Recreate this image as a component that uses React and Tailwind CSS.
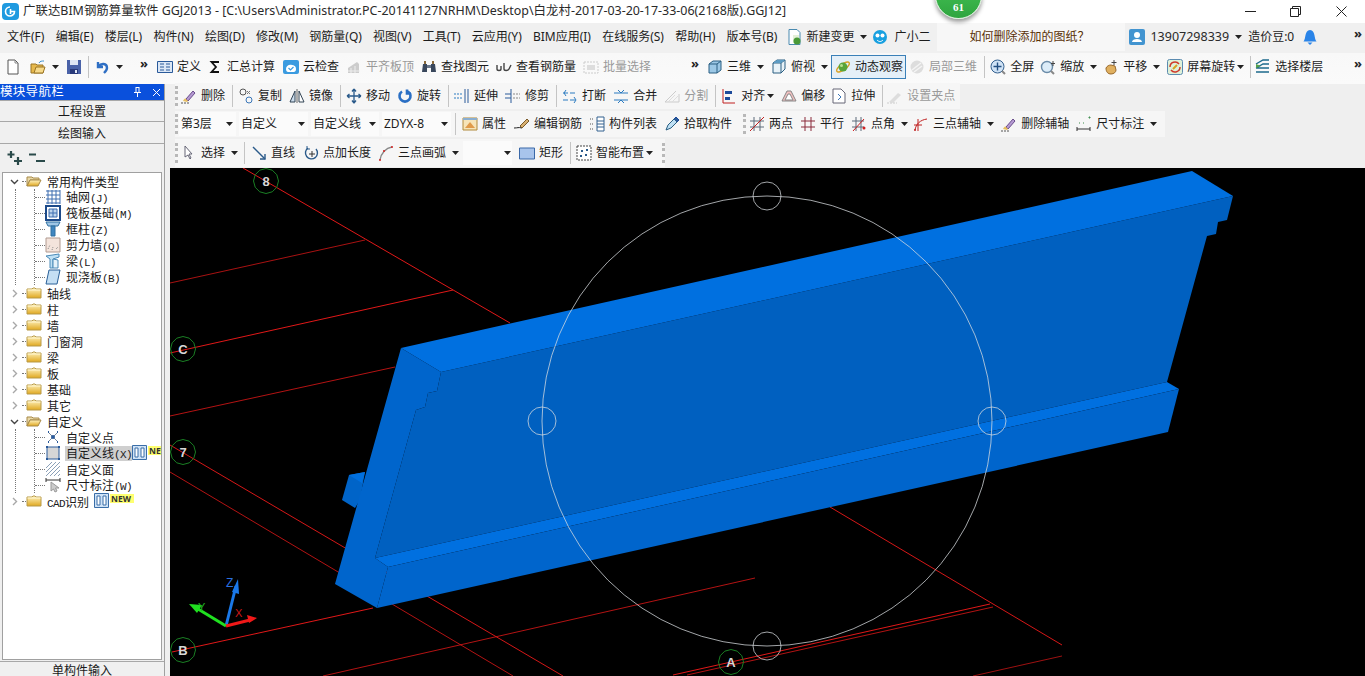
import React from "react";

const font = { fontFamily: '"Noto Sans","Noto Sans CJK SC",sans-serif' };
const monoFont = { fontFamily: '"Liberation Mono",monospace' };

function Svg({ children }) {
  return <svg width="16" height="16" viewBox="0 0 16 16" fill="none" className="shrink-0 block">{children}</svg>;
}

// toolbar icons, hand drawn to the 16px originals
const icons = {
  newdoc: <><path d="M3 1h7l3 3v11H3z" fill="#fff" stroke="#555" /><path d="M10 1v3h3" stroke="#888" /></>,
  open: <><path d="M1 5h5l1 1h6v8H1z" fill="#e6b84c" stroke="#9a7424" /><path d="M4 14l2-6h9l-2 6z" fill="#f6d98a" stroke="#9a7424" /><path d="M9 4c1-2 3-2 5-2" stroke="#3a8fd0" /></>,
  save: <><path d="M1 1h14v14H1z" fill="#4a62a8" /><path d="M4 1h8v5H4z" fill="#dfe6f4" /><path d="M4 10h8v5H4z" fill="#29397a" /><path d="M9 11h2v3H9z" fill="#dfe6f4" /></>,
  undo: <path d="M4 3v5h5M4.5 7.5C7 4 13 4 13 9c0 2-1 3-3 5" stroke="#2f6fc4" strokeWidth="2.4" />,
  define: <><path d="M0.5 2.5h15v11h-15z" fill="#dbe7f6" stroke="#2a5a9a" /><path d="M3 5h4M3 8h4M3 11h4M9 5h4M9 8h4M9 11h4" stroke="#2a5a9a" /></>,
  sum: <path d="M12 3H4.5L9 8l-4.5 5H12" stroke="#111" strokeWidth="1.8" />,
  cloud: <><rect x="0" y="1" width="16" height="14" rx="2" fill="#3b9be0" /><path d="M3 10c0-3 3-5 6-4 2 0 4 1 4 4s-2 3-3 3H5c-1 0-2-1-2-3z" fill="#fff" /><path d="M5.5 9l2 2 3-3" stroke="#3b9be0" strokeWidth="1.2" /></>,
  level: <><path d="M2 14V9l9-6 2 2v9z" fill="#ccc" /><path d="M2 12h12M5 9v5M9 7v7" stroke="#eee" /></>,
  find: <><path d="M2 5h4v8H1zM10 5h4l1 8h-5z" fill="#39475c" /><path d="M6 6h4v3H6z" fill="#6a7688" /><path d="M3 2h2v3H3zM11 2h2v3h-2z" fill="#8a6a3a" /></>,
  rebar: <path d="M1 6v4c0 2 4 2 4 0V7M8 4v6c0 2 4 2 5 0l2-4" stroke="#444" strokeWidth="1.4" />,
  batch: <><path d="M1 3h14v11H1z" stroke="#ccc" strokeDasharray="2 1" /><path d="M4 6h8v5H4z" fill="#ddd" /></>,
  cube: <><path d="M2 5l4-3h8v9l-4 3H2z" fill="#9cc8e6" stroke="#2a5f82" /><path d="M2 5h8v9M10 5l4-3" stroke="#2a5f82" /></>,
  cubeTop: <><path d="M2 4l4-3h8v9l-4 4H2z" fill="#e8f2f8" stroke="#2a5f82" /><path d="M2 4h8v10M10 4l4-3" stroke="#2a5f82" /><path d="M2 4l4-3h8l-4 3z" fill="#5c9cc4" /></>,
  orbit: <><ellipse cx="8" cy="8" rx="7.5" ry="3" transform="rotate(-35 8 8)" stroke="#d8a020" strokeWidth="1.4" /><circle cx="8" cy="8" r="4.5" fill="#5aa53a" /><circle cx="6.5" cy="6.5" r="1.5" fill="#b8e090" /></>,
  local: <><circle cx="8" cy="8" r="6.5" fill="#ddd" /><path d="M3 11l9-7M5 13l8-6" stroke="#f4f4f4" strokeWidth="1.5" /></>,
  fit: <><circle cx="7.5" cy="7.5" r="6.5" fill="#cfe2f5" stroke="#33608f" /><path d="M7.5 3.5v8M3.5 7.5h8" stroke="#234f82" strokeWidth="1.4" /><path d="M12 12l3 3" stroke="#888" strokeWidth="2" /></>,
  zoom: <><circle cx="7" cy="8" r="5.5" fill="#dcecf8" stroke="#6a8ba8" strokeWidth="1.4" /><path d="M11 12l3 3" stroke="#888" strokeWidth="2" /><path d="M13 2v5M11 4.5h4" stroke="#444" /></>,
  pan: <><path d="M3 9c1-2 3-3 5-3l4 1 1 4c0 2-2 4-5 4s-5-2-5-6z" fill="#e0b060" stroke="#98682a" /><path d="M11 1v5M8.5 3.5h5" stroke="#444" /></>,
  rotate: <><rect x="0.5" y="0.5" width="15" height="15" rx="2" fill="#dff0d8" stroke="#5b8bb0" /><path d="M3 8a5 5 0 0 1 9-3M13 8a5 5 0 0 1-9 3" stroke="#d0392c" strokeWidth="1.5" /><path d="M6 10l4-4" stroke="#d8a020" strokeWidth="2" /></>,
  floor: <><path d="M1 5l7-4h6M1 9l7-4h6M1 13h13M1 9h13" stroke="#1c6a8c" strokeWidth="1.4" /><path d="M1 5l5 2-5 2z" fill="#55a04a" /></>,
  erase: <><path d="M5 11l7-8 2 2-7 8z" fill="#b59ad2" stroke="#6a4c8c" /><path d="M2 13c1-2 2-3 3-2l2 2-1 1z" fill="#e8c060" /><path d="M0 15h9" stroke="#555" strokeDasharray="2 1" /></>,
  copy: <><circle cx="5" cy="4" r="3" stroke="#555" /><circle cx="11" cy="12" r="3" stroke="#3a76b8" /><path d="M9 3l3 3M12 3l-3 3" stroke="#777" /></>,
  mirror: <><path d="M8 1v14" stroke="#666" /><path d="M6 3L1 14h5z" fill="#cde" stroke="#345" /><path d="M10 3l5 11h-5z" fill="#fff" stroke="#345" /></>,
  move: <path d="M8 1v14M1 8h14M8 1L6 3.5M8 1l2 2.5M8 15l-2-2.5M8 15l2-2.5M1 8l2.5-2M1 8l2.5 2M15 8l-2.5-2M15 8l-2.5 2" stroke="#2a5a8a" strokeWidth="1.3" />,
  spin: <path d="M5 3.5a5.5 5.5 0 1 0 6 0M10 1.5v4h4" stroke="#2a6fc4" strokeWidth="2.6" />,
  extend: <><path d="M14 1v14M11 1v14" stroke="#2a5a9a" /><path d="M0 6h8M0 10h8" stroke="#2a7ac0" strokeDasharray="2 1" /></>,
  trim: <><path d="M6 1v14" stroke="#2a5a9a" /><path d="M0 6h6M0 10h6" stroke="#2a5a9a" /><path d="M8 6h7M8 10h7" stroke="#888" strokeDasharray="2 1" /></>,
  breakit: <><path d="M1 5h14M1 12h14" stroke="#2a7ac0" strokeDasharray="5 2" /><path d="M4 2L2 5l2 3M12 9l2 3-2 3" stroke="#2a7ac0" /></>,
  merge: <><path d="M1 5h14M1 12h14" stroke="#2a7ac0" /><path d="M5 2l3 3 3-3M5 15l3-3 3 3" stroke="#2a7ac0" /></>,
  split: <><path d="M1 14L12 3M1 14h14V6" stroke="#ccc" /><path d="M4 14l7-7M8 14l6-6" stroke="#ddd" /></>,
  align: <><path d="M2 1v14h12" stroke="#c02020" /><path d="M4 3h7v3H4zM4 9h5v3H4z" fill="#1c4a9a" /></>,
  offset: <><path d="M1 13l5-10h4l5 10z" fill="#f2c0c0" stroke="#888" /><path d="M4 12l3-6h2l3 6z" fill="#fff" stroke="#888" /></>,
  stretch: <><path d="M2 1h8l4 4v10H2z" fill="#fff" stroke="#667" /><path d="M7 6l3 3-3 3" stroke="#3a76b8" /></>,
  grip: <><path d="M2 14l9-9 3 2-8 8z" fill="#ddd" /><path d="M0 15h10" stroke="#ccc" strokeDasharray="2 1" /></>,
  attr: <><path d="M1 2h14v12H1z" fill="#f6e4b8" stroke="#b08a3c" /><path d="M3 12l5-6 5 6z" fill="#e09a4a" /><path d="M1 2h14v2H1z" fill="#8aaed0" /></>,
  editbar: <><path d="M0 12c4 0 4-1 8 0" stroke="#222" /><path d="M6 10l7-7 2 2-7 7z" fill="#d8b070" stroke="#7a5a2a" /></>,
  list: <><path d="M8 1h7v14H8z" fill="#fff" stroke="#33608f" /><path d="M8 5h7M8 8h7M8 11h7" stroke="#33608f" /><path d="M1 3h4M1 8h4M1 13h4" stroke="#555" strokeDasharray="1 1" /></>,
  pick: <><path d="M2 14l2-5 6-6 3 3-6 6z" fill="#bfe0f4" stroke="#2a5f82" /><path d="M10 3l2-2 3 3-2 2" fill="#2a5a9a" stroke="#1c4a9a" /></>,
  twopt: <><path d="M1 5h14M1 11h14M5 1v14M11 1v14" stroke="#5d6a7a" /><path d="M1 15L15 1" stroke="#c02020" /></>,
  parallel: <path d="M1 5h14M1 11h14M5 1v14M11 1v14" stroke="#8a2a3a" />,
  angle: <><path d="M1 5h12M1 11h12M5 1v14M10 1v14" stroke="#5d6a7a" /><path d="M2 15L13 3" stroke="#d02020" /><circle cx="13" cy="12" r="1.5" fill="#d02020" /></>,
  threeaxis: <><path d="M2 14C3 8 7 4 14 3" stroke="#c02020" /><path d="M5 3v12M1 9h8" stroke="#c02020" /><circle cx="2" cy="14" r="1" fill="#c02020" /></>,
  dim: <><path d="M1 11v4M14 11v4M1 13h13" stroke="#333" /><path d="M3 7h1M7 7h1M13 1h1v1h-1z" stroke="#3a8a4a" /></>,
  arrowSel: <path d="M4 1v11l3-2 2 4 1-1-2-4h3z" fill="#fff" stroke="#667" />,
  line: <><path d="M2 2l12 12" stroke="#2a5a8a" strokeWidth="1.4" /><path d="M9 14h5V9" stroke="#2a5a8a" strokeWidth="1.4" /></>,
  ptlen: <><path d="M5 3a6 6 0 1 0 8 1" stroke="#2a5a8a" strokeWidth="1.4" /><path d="M9 6v6M6 9h6" stroke="#333" /><path d="M4 1v3h3" stroke="#2a5a8a" /></>,
  arc: <><path d="M2 15C3 8 8 3 14 2" stroke="#888" strokeWidth="1.4" /><circle cx="2" cy="15" r="1" fill="#d02020" /><circle cx="6" cy="6" r="1" fill="#d02020" /><circle cx="14" cy="2" r="1" fill="#d02020" /></>,
  rect: <path d="M0.5 3h15v11H.5z" fill="#a8c4ec" stroke="#3a68a8" />,
  smart: <><path d="M1 1h14v14H1z" fill="#fff" stroke="#444" strokeDasharray="2 1" /><path d="M5 5h2v2H5zM9 9h2v2H9zM10 4h2v2h-2zM4 10h2v2H4z" fill="#2a5a8a" /></>,
  changefile: <><path d="M3 0.5h8l3 3v12H3z" fill="#fff" stroke="#4a8ab0" /><path d="M7 6h6v8H7z" fill="#e4f0d8" /><circle cx="11" cy="12" r="3.5" fill="#4a9a38" /></>,
  mascot: <><circle cx="8" cy="8" r="7" fill="#18a0e0" /><circle cx="5.5" cy="6.5" r="2" fill="#fff" /><circle cx="10.5" cy="6.5" r="2" fill="#fff" /><path d="M5 11c2 2 4 2 6 0" stroke="#fff" /></>,
  user: <><rect x="0" y="0" width="16" height="16" rx="2" fill="#4294d0" /><circle cx="8" cy="6" r="3" fill="#fff" /><path d="M3 13c0-4 10-4 10 0z" fill="#fff" /></>,
  bell: <><path d="M1.500 12.500C4 10 2.500 1 8 1s4 9 6.500 11.500z" fill="#2a84e8" /><path d="M5.500 13.500h5L8 16z" fill="#2a84e8" /></>,
};

function Caret({ className = "" }) {
  return (
    <svg width="7" height="4" viewBox="0 0 7 4" className={`shrink-0 block ${className}`}>
      <path d="M0 0h7L3.500 4z" fill="#222" />
    </svg>
  );
}

function More({ className = "" }) {
  return <span className={`text-[13px] font-bold leading-none text-[#222] -mt-[8px] ${className}`}>»</span>;
}

function Sep({ className = "" }) {
  return <div className={`w-px h-[22px] shrink-0 bg-[#c4c4c4] ${className}`} />;
}

function Grip({ className = "" }) {
  return <div className={`w-[3px] h-[20px] shrink-0 border-l-[3px] border-dotted border-[#b8b8b8] ${className}`} />;
}

function Tool({ icon, label, caret, off, className = "" }) {
  return (
    <div className={`flex items-center shrink-0 ${className}`}>
      {icon && <Svg>{icons[icon]}</Svg>}
      {label && <span className={`whitespace-nowrap text-[12px] leading-none ml-[4px] ${off ? "text-[#9a9a9a]" : "text-[#1c1c1c]"}`}>{label}</span>}
      {caret && <Caret className="ml-[6px]" />}
    </div>
  );
}

function Drop({ label, className }) {
  return (
    <div className={`flex items-center justify-between h-[24px] bg-[#fbfbfb] pl-[2px] pr-[3px] text-[12px] text-[#1c1c1c] shrink-0 ${className}`}>
      {label}
      <Caret />
    </div>
  );
}

const menus = ["文件(F)", "编辑(E)", "楼层(L)", "构件(N)", "绘图(D)", "修改(M)", "钢筋量(Q)", "视图(V)", "工具(T)", "云应用(Y)", "BIM应用(I)", "在线服务(S)", "帮助(H)", "版本号(B)"];

function Folder({ open }) {
  return (
    <svg width="16" height="14" viewBox="0 0 16 14" className="shrink-0 block">
      <defs>
        <linearGradient id="fold" x1="0" y1="0" x2="0" y2="1">
          <stop offset="0" stopColor="#fff3c0" />
          <stop offset="1" stopColor="#e0a820" />
        </linearGradient>
      </defs>
      {open ? (
        <>
          <path d="M1 3h5l1 1h6v2H4L1 12z" fill="#e8d8a8" stroke="#a88a48" />
          <path d="M1 12l3-6h11l-3 6z" fill="url(#fold)" stroke="#a88a48" />
        </>
      ) : (
        <>
          <path d="M1 3h5l1-1h2l1 1h5v9H1z" fill="url(#fold)" stroke="#b89a48" />
          <path d="M1.500 4h13" stroke="#fff6d0" />
        </>
      )}
    </svg>
  );
}

const treeIcons = {
  grid: <path d="M1 2h14M1 6h14M1 10h14M1 14h14M3 1v14M7 1v14M11 1v14M15 1v14" stroke="#3f6fb0" />,
  raft: <><path d="M1 1h14v14H1z" stroke="#1c4a8a" strokeWidth="2" /><path d="M4 4h8v8H4z" fill="#bcd4ec" stroke="#3f6fb0" /><path d="M8 4v8M4 8h8" stroke="#3f6fb0" /></>,
  col: <><path d="M1 1h14l-2 4H3z" fill="#9fc6e6" stroke="#2f6fa0" /><path d="M6 5h4v10H6z" fill="#3f86c0" stroke="#2f6fa0" /></>,
  wall: <><path d="M1 1h14v14H1z" fill="#f4e4dc" stroke="#b09a90" /><path d="M3 12l2-4M7 13l1-3M11 12l2-2" stroke="#8a8a8a" strokeDasharray="1 1" /></>,
  beam: <><path d="M1 3l13-2v3L8 6v9H5V6z" fill="#bfe0f4" stroke="#4a8ab8" /><path d="M8 6l5 1v8H8z" fill="#e4f2fa" stroke="#4a8ab8" /></>,
  slab: <path d="M4 1h11l-3 14H1z" fill="#c4dff4" stroke="#2a6098" />,
  point: <><path d="M3 3l10 10M13 3L3 13" stroke="#7a8a9a" /><circle cx="8" cy="8" r="2" fill="#2a5a9a" /><path d="M3 3h1M12 3h1M3 13h1M12 13h1" stroke="#2a5a9a" strokeWidth="2" /></>,
  cline: <><path d="M2 2h12v12H2z" fill="#d6d6d6" stroke="#2a5a9a" /><path d="M1 1h2v2H1zM13 1h2v2h-2zM1 13h2v2H1zM13 13h2v2h-2z" fill="#2a5a9a" /></>,
  face: <path d="M1 7L7 1M1 11L11 1M1 15L15 1M5 15L15 5M9 15l6-6M13 15l2-2" stroke="#8aa0b8" />,
  dim: <><path d="M1 1v4M15 1v4M1 3h14" stroke="#333" /><path d="M6 5v9l2.500-2 1.500 3 2-1-1.500-3H14z" fill="#ccc" stroke="#999" /></>,
  bars: <><path d="M.5 .5h14v14H.5z" fill="#cfe2f6" stroke="#3a6ea8" /><path d="M3 3h3v9H3zM9 3h3v9H9z" fill="#fff" stroke="#3a6ea8" /></>,
};

function TreeIcon({ name }) {
  return <Svg>{treeIcons[name]}</Svg>;
}

function Chevron({ open }) {
  return (
    <svg width="9" height="9" viewBox="0 0 9 9" className="shrink-0 block">
      <path d={open ? "M1 3l3.500 3.500L8 3" : "M3 1l3.500 3.500L3 8"} fill="none" stroke={open ? "#444" : "#a8a8a8"} strokeWidth="1.400" />
    </svg>
  );
}

function Label({ text, latin }) {
  return (
    <span className="text-[12px] leading-none whitespace-nowrap text-[#1a1a1a]">
      {text}
      {latin && <span className="text-[11px] tracking-[-0.600px]" style={monoFont}>{latin}</span>}
    </span>
  );
}

function Branch({ name, open, latinFirst, extra }) {
  return (
    <div className="flex items-center h-4 pl-[7px]">
      <Chevron open={open} />
      <div className="w-[4px] ml-[3px] border-t border-dotted border-[#777]" />
      <Folder open={open} />
      <span className="ml-[5px] whitespace-nowrap">
        {latinFirst && <span className="text-[11px] tracking-[-0.600px] text-[#1a1a1a]" style={monoFont}>{latinFirst}</span>}
        <Label text={name} />
      </span>
      {extra}
    </div>
  );
}

function Leaf({ icon, text, latin, last, selected, extra }) {
  return (
    <div className={`flex items-center h-4 ${last ? "-mb-2" : ""}`}>
      <div className="w-[10px] border-t border-dotted border-[#777] shrink-0" />
      <TreeIcon name={icon} />
      <span className={`ml-[4px] pl-[1px] pt-[3px] h-[15px] flex items-center ${selected ? "bg-[#cfcfcf]" : ""}`}>
        <Label text={text} latin={latin} />
      </span>
      {extra}
    </div>
  );
}

// two dotted guide lines, both ending on the last child's row
function Group({ children }) {
  return (
    <div className="ml-[12px] border-l border-dotted border-[#777] pl-[18px]">
      <div className="border-l border-dotted border-[#777]">{children}</div>
    </div>
  );
}

function New({ children, className = "" }) {
  return <span className={`bg-[#ffff70] text-[#333] font-bold text-[8.500px] leading-[9px] h-[9px] overflow-hidden ${className}`}>{children}</span>;
}

function LeftPanel() {
  return (
    <div className="w-[165px] shrink-0 flex flex-col border-r border-[#a0a0a0]">
      <div className="h-[16px] bg-[#0a50dc] text-white flex items-center text-[12.500px] leading-none tracking-[0.300px] shrink-0">
        <span className="flex-1">模块导航栏</span>
        <svg width="9" height="10" viewBox="0 0 9 10" className="mr-[10px]"><path d="M2.500 .5h4M3 1v4M6 1v4M1 5.500h7M4.500 6v4" stroke="#fff" /></svg>
        <svg width="9" height="9" viewBox="0 0 9 9" className="mr-[3px]"><path d="M1 1l7 7M8 1L1 8" stroke="#fff" /></svg>
      </div>
      <div className="h-[22px] shrink-0 border-y border-[#a8a8a8] bg-[#f0f0f0] flex items-center justify-center pt-[2px] text-[12px] text-[#1a1a1a]">工程设置</div>
      <div className="h-[22px] shrink-0 border-b border-[#a8a8a8] bg-[#f0f0f0] flex items-center justify-center pt-[2px] text-[12px] text-[#1a1a1a]">绘图输入</div>
      <div className="h-[28px] shrink-0 bg-[#f0f0f0] flex items-center pl-[7px] gap-[3px]">
        <svg width="18" height="16" viewBox="0 0 18 16"><path d="M4 1v7M.5 4.500h7M11 7v8M7 11h8" stroke="#2a4a4a" strokeWidth="2.200" /></svg>
        <svg width="18" height="16" viewBox="0 0 18 16"><path d="M1 4.500h7M8 11h9" stroke="#2a4a4a" strokeWidth="2.200" /></svg>
      </div>
      <div className="flex-1 mx-[2px] bg-white border border-[#a0a0a0] overflow-hidden">
        <Branch name="常用构件类型" open />
        <Group>
          <Leaf icon="grid" text="轴网" latin="(J)" />
          <Leaf icon="raft" text="筏板基础" latin="(M)" />
          <Leaf icon="col" text="框柱" latin="(Z)" />
          <Leaf icon="wall" text="剪力墙" latin="(Q)" />
          <Leaf icon="beam" text="梁" latin="(L)" />
          <Leaf icon="slab" text="现浇板" latin="(B)" last />
        </Group>
        <div className="mt-2">
          {["轴线", "柱", "墙", "门窗洞", "梁", "板", "基础", "其它"].map((n, i) => <Branch key={i} name={n} />)}
        </div>
        <Branch name="自定义" open />
        <Group>
          <Leaf icon="point" text="自定义点" />
          <Leaf
            icon="cline"
            text="自定义线"
            latin="(X)"
            selected
            extra={<div className="flex items-start shrink-0"><TreeIcon name="bars" /><New className="w-[20px] mt-[1px] pl-[1px]">NEW</New></div>}
          />
          <Leaf icon="face" text="自定义面" />
          <Leaf icon="dim" text="尺寸标注" latin="(W)" last />
        </Group>
        <div className="mt-2">
          <Branch
            name="识别"
            latinFirst="CAD"
            extra={<div className="flex items-start ml-[5px]"><TreeIcon name="bars" /><New className="w-[24px] mt-[1px] pl-[1px]">NEW</New></div>}
          />
        </div>
      </div>
      <div className="h-[15px] shrink-0 mt-[1px] border-t border-[#a8a8a8] bg-[#f0f0f0] flex items-start justify-center text-[12px] leading-[18px] text-[#1a1a1a]">单构件输入</div>
    </div>
  );
}

function Badge({ x, y, label }) {
  return (
    <g>
      <polygon
        points={[0, 1, 2, 3, 4, 5, 6, 7, 8, 9, 10, 11].map((i) => {
          const a = (i * Math.PI) / 6;
          return `${x + 12.5 * Math.cos(a)},${y + 12.5 * Math.sin(a)}`;
        }).join(" ")}
        fill="none"
        stroke="#1a7f24"
      />
      <text x={x} y={y + 4.500} textAnchor="middle" fontSize="13" fontWeight="700" fill="#d8d8d8" fontFamily="Liberation Sans, sans-serif">{label}</text>
    </g>
  );
}

const redLines = [
  ["243,168 510,323", 1],
  ["170,283 365,240", 0.75],
  ["170,353 453,290", 1],
  ["170,416 395,367", 0.8],
  ["170,445 563,676", 0.95],
  ["170,472 513,676", 0.8],
  ["172,652 373,608", 1],
  ["323,676 755,578", 0.8],
  ["673,675 990,604", 1],
  ["687,675 993,607", 0.8],
  ["830,507 1062,645", 0.95],
  ["973,676 1062,656", 0.7],
];

function Viewport() {
  return (
    <div className="flex-1 bg-black min-h-0">
      <svg viewBox="170 168 1195 508" className="block w-full h-full">
        {redLines.map(([p, o], i) => (
          <polyline key={i} points={p} fill="none" stroke="#e01818" strokeOpacity={o} strokeWidth="1" />
        ))}

        {/* beam */}
        <path d="M349 475L365 472L360 500L355 508L342 500Z" fill="#0064c8" />
        <path d="M349 475L365 472L362 483Z" fill="#0070e0" />
        <path d="M441 372L1233 196L1227 220L1218 222L1216 234L1207 236L1167 382L375 558L416 410L425 407L428 393L437 391Z" fill="#0060c0" />
        <path d="M401 348L441 372L437 391L428 393L425 407L416 410L375 558L388 567L377 608L335 584Z" fill="#0065cc" />
        <path d="M401 348L1192 171L1233 196L441 372Z" fill="#0070e0" />
        <path d="M375 558L1167 382L1179 389L388 567Z" fill="#0070e0" />
        <path d="M388 567L1179 389L1168 432L377 608Z" fill="#0065cc" />

        {/* orbit circles */}
        <circle cx="767" cy="421" r="225" fill="none" stroke="#d8dce0" strokeOpacity="0.75" />
        <circle cx="767" cy="196" r="14" fill="none" stroke="#d8dce0" strokeOpacity="0.75" />
        <circle cx="542" cy="421" r="14" fill="none" stroke="#d8dce0" strokeOpacity="0.75" />
        <circle cx="992" cy="421" r="14" fill="none" stroke="#d8dce0" strokeOpacity="0.75" />
        <circle cx="767" cy="646" r="14" fill="none" stroke="#d8dce0" strokeOpacity="0.75" />

        <Badge x={266} y={181} label="8" />
        <Badge x={183} y={349} label="C" />
        <Badge x={183} y={452} label="7" />
        <Badge x={183} y={650} label="B" />
        <Badge x={731} y={662} label="A" />

        {/* axis gizmo */}
        <path d="M226 626L236 586" stroke="#1a78e8" strokeWidth="3" />
        <path d="M238 579L232 592L239 594Z" fill="#1a78e8" />
        <path d="M226 626L198 609" stroke="#20e020" strokeWidth="3" />
        <path d="M189 604L202 605L197 613Z" fill="#20e020" />
        <path d="M226 626L250 620" stroke="#f01818" strokeWidth="3" />
        <path d="M257 618L247 615L249 623Z" fill="#f01818" />
        <g fontFamily="Liberation Sans, sans-serif" fontSize="11">
          <text x="226" y="587" fill="#2a70e0" fontSize="12">Z</text>
          <text x="198" y="611" fill="#20b020">Y</text>
          <text x="235" y="617" fill="#d01818">X</text>
        </g>
      </svg>
    </div>
  );
}

export default function App() {
  return (
    <div className="relative w-[1365px] h-[676px] overflow-hidden bg-[#efefef] flex flex-col" style={font}>
      {/* title bar */}
      <div className="h-[23px] shrink-0 bg-white flex items-center pl-[2px]">
        <svg width="17" height="17" viewBox="0 0 17 17" className="shrink-0">
          <rect width="17" height="17" rx="4" fill="#1f9ae0" />
          <path d="M8 4a4.500 4.500 0 1 0 4.500 4.500H8.500M8.500 6v5" stroke="#fff" strokeWidth="1.600" fill="none" />
        </svg>
        <span className="ml-[4px] text-[12.450px] text-[#2a2a2a] whitespace-nowrap">广联达BIM钢筋算量软件 GGJ2013 - [C:\Users\Administrator.PC-20141127NRHM\Desktop\白龙村-2017-03-20-17-33-06(2168版).GGJ12]</span>
        <div className="ml-auto flex items-center">
          <svg width="11" height="11" viewBox="0 0 11 11" className="mr-[34px]"><path d="M0 5.500h11" stroke="#222" /></svg>
          <svg width="11" height="11" viewBox="0 0 11 11" className="mr-[35px]"><path d="M.5 2.500h8v8h-8zM2.500 2.500v-2h8v8h-2" fill="none" stroke="#222" /></svg>
          <svg width="11" height="11" viewBox="0 0 11 11" className="mr-[18px]"><path d="M.5 .5l10 10M10.500 .5l-10 10" stroke="#222" /></svg>
        </div>
      </div>

      {/* floating score */}
      <div className="absolute left-[935px] top-[-28px] w-[47px] h-[47px] rounded-full bg-linear-to-b from-[#49c95a] to-[#2fa53f] border border-[#d8efd8] shadow-[0_3px_4px_rgba(0,0,0,0.4)] flex items-end justify-center pb-[5px] text-white text-[11px] font-bold leading-none" style={{ fontFamily: '"Liberation Serif",serif' }}>61</div>

      {/* menu bar */}
      <div className="h-[30px] shrink-0 pb-[2px] flex items-center pl-[7px] text-[12px] leading-none text-[#1c1c1c] bg-[#f0f0f0]">
        <div className="flex items-center gap-[11.200px]">
          {menus.map((m) => <span key={m} className="whitespace-nowrap">{m}</span>)}
        </div>
        <Tool icon="changefile" label="新建变更" caret className="ml-[9px]" />
        <Tool icon="mascot" label="广小二" className="ml-[5px] [&>span]:ml-[6px]" />
        <div className="ml-[7px] w-[188px] h-full bg-[#f7f7f7] flex items-center pl-[32px] text-[#5a3208] whitespace-nowrap">如何删除添加的图纸？</div>
        <Tool icon="user" className="ml-[4px]" />
        <span className="ml-[5px] text-[12.500px] text-[#2a2a2a]">13907298339</span>
        <Caret className="ml-[6px]" />
        <span className="ml-[6px] whitespace-nowrap">造价豆:0</span>
        <Tool icon="bell" className="ml-[8px]" />
        <More className="ml-auto mr-[3px]" />
      </div>

      {/* main toolbar */}
      <div className="h-[31px] shrink-0 pb-[3px] flex items-center pl-[5px] bg-linear-to-b from-[#f8f8f8] to-[#fafafa]">
        <Tool icon="newdoc" />
        <Tool icon="open" caret className="ml-[9px]" />
        <Tool icon="save" className="ml-[7px]" />
        <Sep className="ml-[6px]" />
        <Tool icon="undo" caret className="ml-[5px]" />
        <More className="ml-[17px]" />
        <Tool icon="define" label="定义" className="ml-[9px]" />
        <Tool icon="sum" label="汇总计算" className="ml-[6px]" />
        <Tool icon="cloud" label="云检查" className="ml-[8px]" />
        <Tool icon="level" label="平齐板顶" off className="ml-[7px]" />
        <Tool icon="find" label="查找图元" className="ml-[7px]" />
        <Tool icon="rebar" label="查看钢筋量" className="ml-[7px]" />
        <Tool icon="batch" label="批量选择" off className="ml-[7px]" />
        <More className="ml-[40px]" />
        <Tool icon="cube" label="三维" caret className="ml-[8px]" />
        <Tool icon="cubeTop" label="俯视" caret className="ml-[7px]" />
        <div className="ml-[3px] w-[75px] h-[24px] border border-[#3a80b8] bg-[#e4eff8] flex items-center pl-[3px]">
          <Tool icon="orbit" label="动态观察" />
        </div>
        <Tool icon="local" label="局部三维" off className="ml-[3px]" />
        <Sep className="ml-[7px]" />
        <Tool icon="fit" label="全屏" className="ml-[5px]" />
        <Tool icon="zoom" label="缩放" caret className="ml-[6px]" />
        <Tool icon="pan" label="平移" caret className="ml-[6px]" />
        <Tool icon="rotate" label="屏幕旋转" className="ml-[7px]" />
        <Caret className="ml-[2px]" />
        <Sep className="ml-[6px]" />
        <Tool icon="floor" label="选择楼层" className="ml-[4px]" />
        <More className="ml-auto mr-[3px]" />
      </div>

      <div className="flex-1 flex min-h-0">
        <LeftPanel />
        <div className="flex-1 ml-[5px] flex flex-col min-w-0">
          <div className="h-[26px] shrink-0 pb-[2px] flex items-center pl-[5px]">
            <div className="flex items-center gap-[7px] h-[26px] w-[785px] bg-[#f6f6f6]">
              <Grip className="-mr-[4px]" />
              <Tool icon="erase" label="删除" />
              <Sep className="-mr-[2px]" />
              <Tool icon="copy" label="复制" />
              <Tool icon="mirror" label="镜像" />
              <Sep className="-mr-[2px]" />
              <Tool icon="move" label="移动" />
              <Tool icon="spin" label="旋转" />
              <Sep className="-mr-[2px]" />
              <Tool icon="extend" label="延伸" />
              <Tool icon="trim" label="修剪" />
              <Sep className="-mr-[2px]" />
              <Tool icon="breakit" label="打断" />
              <Tool icon="merge" label="合并" />
              <Tool icon="split" label="分割" off />
              <Sep className="-mr-[2px]" />
              <Tool icon="align" label="对齐" />
              <Caret className="-ml-[5px]" />
              <Tool icon="offset" label="偏移" />
              <Tool icon="stretch" label="拉伸" className="-ml-[1px]" />
              <Sep className="-mr-[2px]" />
              <Tool icon="grip" label="设置夹点" off className="-ml-[1px]" />
            </div>
          </div>
          <div className="h-[28px] shrink-0 flex items-center pl-[5px]">
            <div className="flex items-center h-[26px] w-[990px] bg-[#f6f6f6]">
              <Grip />
              <Drop label="第3层" className="w-[57px] ml-[1px]" />
              <Drop label="自定义" className="w-[69px] ml-[3px]" />
              <Drop label="自定义线" className="w-[68px] ml-[3px]" />
              <Drop label="ZDYX-8" className="w-[69px] ml-[3px]" />
              <Sep className="ml-[4px]" />
              <Tool icon="attr" label="属性" className="ml-[6px]" />
              <Tool icon="editbar" label="编辑钢筋" className="ml-[8px]" />
              <Tool icon="list" label="构件列表" className="ml-[7px]" />
              <Tool icon="pick" label="拾取构件" className="ml-[7px]" />
              <Grip className="ml-[11px]" />
              <Tool icon="twopt" label="两点" className="ml-[3px]" />
              <Tool icon="parallel" label="平行" className="ml-[7px]" />
              <Tool icon="angle" label="点角" caret className="ml-[7px]" />
              <Tool icon="threeaxis" label="三点辅轴" caret className="ml-[5px]" />
              <Tool icon="erase" label="删除辅轴" className="ml-[7px]" />
              <Tool icon="dim" label="尺寸标注" caret className="ml-[7px]" />
            </div>
          </div>
          <div className="h-[30px] shrink-0 flex items-center pl-[5px]">
            <div className="flex items-center h-[28px] w-[490px] bg-[#f6f6f6]">
              <Grip />
              <Tool icon="arrowSel" label="选择" caret className="ml-[3px]" />
              <Sep className="ml-[6px]" />
              <Tool icon="line" label="直线" className="ml-[6px]" />
              <Tool icon="ptlen" label="点加长度" className="ml-[8px]" />
              <Tool icon="arc" label="三点画弧" caret className="ml-[7px]" />
              <div className="ml-[4px] w-[53px] h-[24px] bg-[#fbfbfb] flex items-center justify-end pr-[1px]"><Caret /></div>
              <Tool icon="rect" label="矩形" className="ml-[7px]" />
              <Sep className="ml-[7px]" />
              <Tool icon="smart" label="智能布置" className="ml-[5px]" />
              <Caret className="ml-[2px]" />
              <Grip className="ml-[9px]" />
            </div>
          </div>
          <Viewport />
        </div>
      </div>
    </div>
  );
}
